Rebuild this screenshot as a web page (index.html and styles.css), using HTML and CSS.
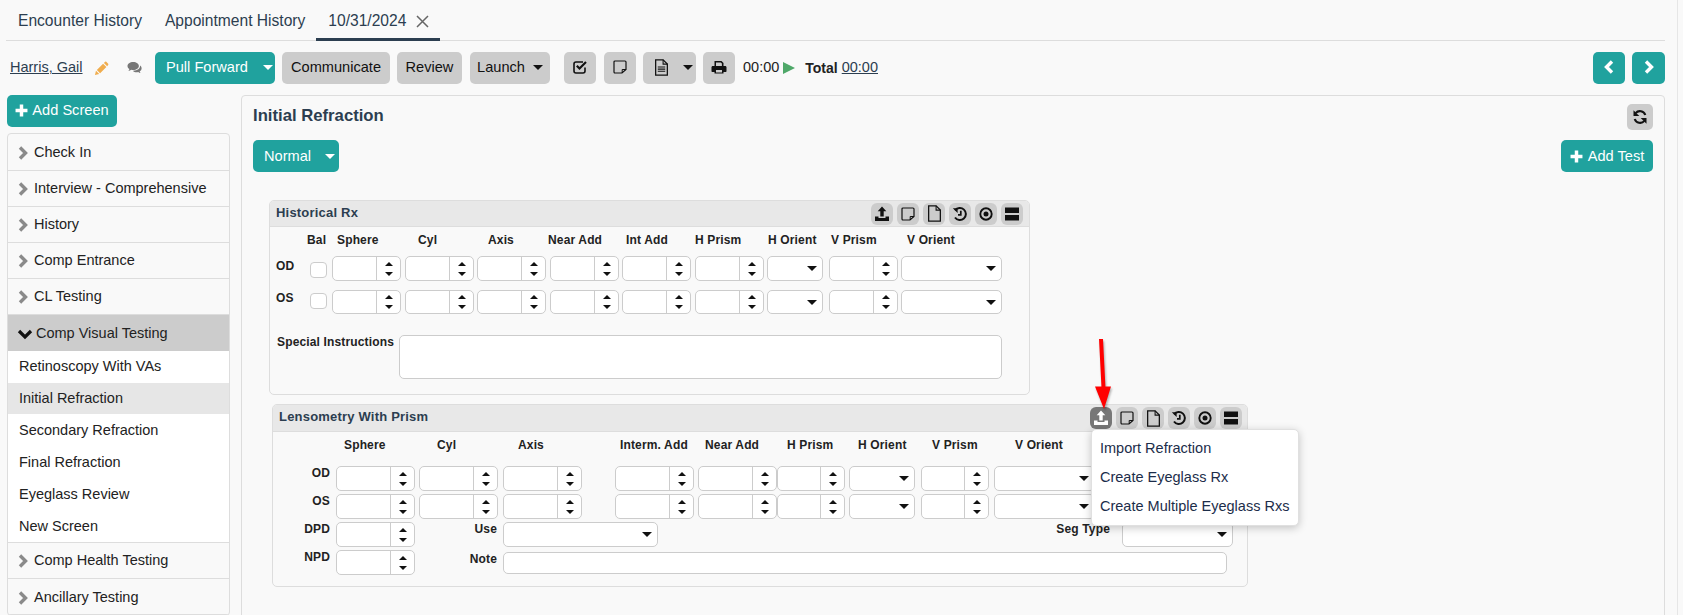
FILE: index.html
```html
<!DOCTYPE html>
<html lang="en">
<head>
<meta charset="utf-8">
<title>Initial Refraction</title>
<link rel="stylesheet" href="styles.css">
</head>
<body>
<svg class="defs" aria-hidden="true">
  <symbol id="i-x" viewBox="0 0 13 13"><path d="M1 1 12 12M12 1 1 12" fill="none" stroke="currentColor" stroke-width="1.500"/></symbol>
  <symbol id="i-right" viewBox="0 0 12 16"><path d="M3 2.500 8.500 8 3 13.500" fill="none" stroke="currentColor" stroke-width="3.400"/></symbol>
  <symbol id="i-down" viewBox="0 0 16 12"><path d="M2 3 8 9 14 3" fill="none" stroke="currentColor" stroke-width="3.200"/></symbol>
  <symbol id="i-left-n" viewBox="0 0 12 16"><path d="M9 2.500 3.500 8 9 13.500" fill="none" stroke="currentColor" stroke-width="3.400"/></symbol>
  <symbol id="i-plus" viewBox="0 0 12 12"><path d="M4.400 .5h3.200v3.900h3.900v3.200H7.600v3.900H4.400V7.600H.5V4.400h3.900z" fill="currentColor"/></symbol>
  <symbol id="i-pencil" viewBox="0 0 16 16"><path d="M1 15l1.100-4.600 3.500 3.500zM3 9.600l6.700-6.700 3.500 3.500-6.700 6.700zM10.600 2l1.200-1.100a1 1 0 0 1 1.300 0l2 2a1 1 0 0 1 0 1.300L14 5.500z" fill="currentColor"/></symbol>
  <symbol id="i-chat" viewBox="0 0 16 14"><path d="M6.200 1C2.900 1 .5 2.800.5 5c0 1.200.7 2.300 1.900 3-.2.8-.6 1.400-1 1.900 1.100-.1 2.100-.6 2.800-1.100.7.1 1.300.2 2 .2 3.200 0 5.700-1.800 5.700-4S9.400 1 6.200 1z" fill="currentColor"/><path d="M13.200 4.600c.1 3-2.900 5.200-6.700 5.200l-.7 0c.9 1 2.400 1.500 3.900 1.500.5 0 1-.1 1.500-.2.600.5 1.400.9 2.400 1-.4-.4-.7-1-.9-1.600 1.200-.7 1.900-1.700 1.900-2.900 0-1.300-.5-2.300-1.400-3z" fill="currentColor"/></symbol>
  <symbol id="i-check" viewBox="0 0 16 16"><path d="M13 8.500V12a2 2 0 0 1-2 2H4a2 2 0 0 1-2-2V5a2 2 0 0 1 2-2h7" fill="none" stroke="currentColor" stroke-width="1.600"/><path d="M4.800 6.800 7.500 9.500 14 3" fill="none" stroke="currentColor" stroke-width="2.200"/></symbol>
  <symbol id="i-note" viewBox="0 0 14 14"><path d="M2 1h10a1 1 0 0 1 1 1v7.500L9 13H2a1 1 0 0 1-1-1V2a1 1 0 0 1 1-1z" fill="none" stroke="currentColor" stroke-width="1.200"/><path d="M9.200 13V9.500H13" fill="none" stroke="currentColor" stroke-width="1"/></symbol>
  <symbol id="i-doc" viewBox="0 0 14 16"><path d="M1.500.8h7l4 4v10.400h-11z" fill="none" stroke="currentColor" stroke-width="1.200"/><path d="M8.500.8v4h4" fill="none" stroke="currentColor" stroke-width="1"/><path d="M3.500 7.500h7M3.500 9.500h7M3.500 11.500h7" fill="none" stroke="currentColor" stroke-width="1"/></symbol>
  <symbol id="i-file" viewBox="0 0 14 16"><path d="M1.500.8h7l4 4v10.400h-11z" fill="none" stroke="currentColor" stroke-width="1.200"/><path d="M8.500.8v4h4" fill="none" stroke="currentColor" stroke-width="1"/></symbol>
  <symbol id="i-print" viewBox="0 0 16 14"><path d="M3.500 1h7l2 2v3h-1.600V3.600L9.800 2.500H5V6H3.500zM1.800 6h12.400c.7 0 1.300.6 1.300 1.300v4c0 .4-.3.7-.7.7H12.500v1.500h-9V12H1.200c-.4 0-.7-.3-.7-.7v-4C.5 6.600 1.100 6 1.800 6zM5 10v2.500h6V10z" fill="currentColor" fill-rule="evenodd"/></symbol>
  <symbol id="i-refresh" viewBox="0 0 16 16"><path d="M13.300 6A5.700 5.700 0 0 0 3.600 4.100" fill="none" stroke="currentColor" stroke-width="2.100"/><path d="M1.500 1.200V7h5.800z" fill="currentColor"/><path d="M2.700 10a5.700 5.700 0 0 0 9.700 1.900" fill="none" stroke="currentColor" stroke-width="2.100"/><path d="M14.500 14.800V9H8.700z" fill="currentColor"/></symbol>
  <symbol id="i-upload" viewBox="0 0 16 16"><path d="M8 .5l4.300 4.800H9.700v5.200H6.300V5.300H3.700z" fill="currentColor"/><path d="M1 10.500h3.500v1.500h7v-1.500H15V15H1z" fill="currentColor"/></symbol>
  <symbol id="i-history" viewBox="0 0 16 16"><path d="M3.100 4.400A6 6 0 1 1 3 11.500" fill="none" stroke="currentColor" stroke-width="2"/><path d="M.8 2.200h4.800v4.800z" fill="currentColor"/><path d="M8.800 4.800v4H6" fill="none" stroke="currentColor" stroke-width="1.700"/></symbol>
  <symbol id="i-dot" viewBox="0 0 16 16"><circle cx="8" cy="8" r="5.700" fill="none" stroke="currentColor" stroke-width="1.900"/><circle cx="8" cy="8" r="2.500" fill="currentColor"/></symbol>
  <symbol id="i-bars" viewBox="0 0 14 14"><path d="M0 .5h14v5.500H0zM0 8h14v5.500H0z" fill="currentColor"/></symbol>
</svg>

<div class="page">
  <nav class="tabs">
    <a class="tab">Encounter History</a>
    <a class="tab">Appointment History</a>
    <a class="tab tab-active">10/31/2024<svg class="tab-x"><use href="#i-x"/></svg></a>
  </nav>

  <div class="toolbar">
    <a class="patient">Harris, Gail</a>
    <svg class="ic-pencil"><use href="#i-pencil"/></svg>
    <svg class="ic-chat"><use href="#i-chat"/></svg>
    <button class="btn teal split pull">Pull Forward<span class="caret light"></span></button>
    <button class="btn grey comm">Communicate</button>
    <button class="btn grey rev">Review</button>
    <button class="btn grey launch">Launch<span class="caret"></span></button>
    <button class="btn grey sq first-sq"><svg class="ic16"><use href="#i-check"/></svg></button>
    <button class="btn grey sq"><svg class="ic14"><use href="#i-note"/></svg></button>
    <button class="btn grey docbtn"><svg class="ic-doc"><use href="#i-doc"/></svg><span class="caret"></span></button>
    <button class="btn grey sq"><svg class="ic16"><use href="#i-print"/></svg></button>
    <span class="time">00:00</span>
    <span class="play"></span>
    <b class="total">Total</b>
    <a class="time-link">00:00</a>
    <span class="spacer"></span>
    <button class="btn teal nav"><svg class="ic-nav"><use href="#i-left-n"/></svg></button>
    <button class="btn teal nav"><svg class="ic-nav flip"><use href="#i-left-n"/></svg></button>
  </div>

  <div class="content">
    <aside class="left">
      <button class="btn teal add-screen"><svg class="ic-plus"><use href="#i-plus"/></svg>Add Screen</button>
      <div class="side">
        <div class="group"><svg class="chev"><use href="#i-right"/></svg>Check In</div>
        <div class="group"><svg class="chev"><use href="#i-right"/></svg>Interview - Comprehensive</div>
        <div class="group"><svg class="chev"><use href="#i-right"/></svg>History</div>
        <div class="group"><svg class="chev"><use href="#i-right"/></svg>Comp Entrance</div>
        <div class="group"><svg class="chev"><use href="#i-right"/></svg>CL Testing</div>
        <div class="group open"><svg class="chev-d"><use href="#i-down"/></svg>Comp Visual Testing</div>
        <div class="subs">
          <div class="sub">Retinoscopy With VAs</div>
          <div class="sub current">Initial Refraction</div>
          <div class="sub">Secondary Refraction</div>
          <div class="sub">Final Refraction</div>
          <div class="sub">Eyeglass Review</div>
          <div class="sub">New Screen</div>
        </div>
        <div class="group"><svg class="chev"><use href="#i-right"/></svg>Comp Health Testing</div>
        <div class="group"><svg class="chev"><use href="#i-right"/></svg>Ancillary Testing</div>
      </div>
    </aside>

    <main class="main">
      <div class="main-head">
        <h1 class="main-title">Initial Refraction</h1>
        <button class="btn grey refresh"><svg class="ic16"><use href="#i-refresh"/></svg></button>
      </div>
      <div class="main-actions">
        <button class="btn teal split normal">Normal<span class="caret light"></span></button>
        <button class="btn teal add-test"><svg class="ic-plus"><use href="#i-plus"/></svg>Add Test</button>
      </div>

      <section class="card hist">
        <header class="card-head">
          <h2 class="card-title">Historical Rx</h2>
          <div class="tools">
            <button class="tool"><svg class="t-ic"><use href="#i-upload"/></svg></button>
            <button class="tool"><svg class="t-sm"><use href="#i-note"/></svg></button>
            <button class="tool"><svg class="t-doc"><use href="#i-file"/></svg></button>
            <button class="tool"><svg class="t-ic"><use href="#i-history"/></svg></button>
            <button class="tool"><svg class="t-ic"><use href="#i-dot"/></svg></button>
            <button class="tool"><svg class="t-sm"><use href="#i-bars"/></svg></button>
          </div>
        </header>
        <div class="hist-labels">
          <span>Bal</span><span>Sphere</span><span>Cyl</span><span>Axis</span><span>Near Add</span><span>Int Add</span><span>H Prism</span><span>H Orient</span><span>V Prism</span><span>V Orient</span>
        </div>
        <div class="hist-row od">
          <span class="eye">OD</span><span class="check"></span>
          <span class="num"><input type="text"><span class="spin"></span></span>
          <span class="num"><input type="text"><span class="spin"></span></span>
          <span class="num"><input type="text"><span class="spin"></span></span>
          <span class="num"><input type="text"><span class="spin"></span></span>
          <span class="num"><input type="text"><span class="spin"></span></span>
          <span class="num"><input type="text"><span class="spin"></span></span>
          <span class="sel"></span>
          <span class="num"><input type="text"><span class="spin"></span></span>
          <span class="sel vo"></span>
        </div>
        <div class="hist-row os">
          <span class="eye">OS</span><span class="check"></span>
          <span class="num"><input type="text"><span class="spin"></span></span>
          <span class="num"><input type="text"><span class="spin"></span></span>
          <span class="num"><input type="text"><span class="spin"></span></span>
          <span class="num"><input type="text"><span class="spin"></span></span>
          <span class="num"><input type="text"><span class="spin"></span></span>
          <span class="num"><input type="text"><span class="spin"></span></span>
          <span class="sel"></span>
          <span class="num"><input type="text"><span class="spin"></span></span>
          <span class="sel vo"></span>
        </div>
        <div class="instructions">
          <label class="instr-label">Special Instructions</label>
          <textarea class="instr-box"></textarea>
        </div>
      </section>

      <section class="card lens">
        <header class="card-head">
          <h2 class="card-title">Lensometry With Prism</h2>
          <div class="tools">
            <div class="tool-wrap">
              <button class="tool active"><svg class="t-ic"><use href="#i-upload"/></svg></button>
              <svg class="arrow" viewBox="0 0 24 76"><path d="M8 2h4l2.500 49h-4z M4 49.500h16L13 72z" fill="#f00"/></svg>
              <div class="menu">
                <a class="menu-item">Import Refraction</a>
                <a class="menu-item">Create Eyeglass Rx</a>
                <a class="menu-item">Create Multiple Eyeglass Rxs</a>
              </div>
            </div>
            <button class="tool"><svg class="t-sm"><use href="#i-note"/></svg></button>
            <button class="tool"><svg class="t-doc"><use href="#i-file"/></svg></button>
            <button class="tool"><svg class="t-ic"><use href="#i-history"/></svg></button>
            <button class="tool"><svg class="t-ic"><use href="#i-dot"/></svg></button>
            <button class="tool"><svg class="t-sm"><use href="#i-bars"/></svg></button>
          </div>
        </header>
        <div class="lens-labels">
          <span>Sphere</span><span>Cyl</span><span>Axis</span><span>Interm. Add</span><span>Near Add</span><span>H Prism</span><span>H Orient</span><span>V Prism</span><span>V Orient</span>
        </div>
        <div class="lens-grid">
          <span class="rlabel c1">OD</span>
          <span class="num"><input type="text"><span class="spin"></span></span>
          <span class="num"><input type="text"><span class="spin"></span></span>
          <span class="num"><input type="text"><span class="spin"></span></span>
          <span class="num"><input type="text"><span class="spin"></span></span>
          <span class="num"><input type="text"><span class="spin"></span></span>
          <span class="num prism"><input type="text"><span class="spin"></span></span>
          <span class="sel"></span>
          <span class="num prism"><input type="text"><span class="spin"></span></span>
          <span class="sel vo"></span>

          <span class="rlabel c1">OS</span>
          <span class="num"><input type="text"><span class="spin"></span></span>
          <span class="num"><input type="text"><span class="spin"></span></span>
          <span class="num"><input type="text"><span class="spin"></span></span>
          <span class="num"><input type="text"><span class="spin"></span></span>
          <span class="num"><input type="text"><span class="spin"></span></span>
          <span class="num prism"><input type="text"><span class="spin"></span></span>
          <span class="sel"></span>
          <span class="num prism"><input type="text"><span class="spin"></span></span>
          <span class="sel vo"></span>

          <span class="rlabel c1">DPD</span>
          <span class="num"><input type="text"><span class="spin"></span></span>
          <span class="rlabel c3">Use</span>
          <span class="sel use"></span>
          <span class="rlabel seg-label">Seg Type</span>
          <span class="sel seg"></span>

          <span class="rlabel c1">NPD</span>
          <span class="num"><input type="text"><span class="spin"></span></span>
          <span class="rlabel c3 note-label">Note</span>
          <input class="note" type="text">
        </div>
      </section>
    </main>
  </div>
</div>
</body>
</html>
```

FILE: styles.css
```css
* { box-sizing: border-box; }
html, body { margin: 0; height: 615px; overflow: hidden; }
body {
  background: #f9f9f9;
  color: #222;
  font: 14.5px/1.2 "Liberation Sans", Arial, sans-serif;
}
.defs { display: none; }
svg { display: block; flex: none; }

.page {
  width: 1678px;
  height: 615px;
  padding: 0 12px 0 6px;
  border-right: 1px solid #e6e6e6;
}

/* tabs */
.tabs {
  display: flex;
  height: 41px;
  border-bottom: 1px solid #ddd;
}
.tab {
  height: 41px;
  padding: 12px 11px 0 12px;
  font-size: 15.6px;
  line-height: 18px;
  color: #2c3e50;
  white-space: nowrap;
}
.tab-active {
  display: flex;
  border-bottom: 3px solid #2c3e50;
}
.tab-x {
  width: 13px;
  height: 13px;
  margin: 3px 0 0 10px;
  color: #666;
}

/* toolbar */
.toolbar {
  display: flex;
  align-items: center;
  height: 32px;
  margin-top: 11px;
  padding-left: 4px;
}
.patient { text-decoration: underline; color: #2c3e50; font-size: 14.5px; width: 72px; white-space: nowrap; }
.ic-pencil { width: 15px; height: 15px; color: #f0ad4e; margin-left: 12px; }
.ic-chat { width: 16px; height: 14px; color: #777; margin-left: 18px; }

.btn {
  display: inline-flex;
  align-items: center;
  justify-content: center;
  height: 32px;
  padding: 0 0 2px;
  border: 0;
  border-radius: 5px;
  font: 14.6px "Liberation Sans", Arial, sans-serif;
  white-space: nowrap;
}
.teal { background: #20a29e; color: #fff; }
.grey { background: #ccc; color: #111; }
.caret {
  width: 0;
  height: 0;
  border: 5px solid transparent;
  border-top-color: #111;
  border-bottom-width: 0;
}
.caret.light { border-top-color: #fff; }
.split { justify-content: flex-start; padding-left: 11px; }
.pull { width: 120px; margin-left: 12px; }
.pull .caret { margin-left: 15px; }
.comm { width: 108px; margin-left: 7px; }
.rev { width: 65px; margin-left: 7px; }
.launch { width: 80px; margin-left: 8px; }
.launch .caret { margin-left: 8px; }
.sq { width: 32px; margin-left: 8px; }
.first-sq { margin-left: 14px; }
.docbtn { width: 53px; margin-left: 7px; justify-content: flex-start; padding-left: 11px; }
.docbtn .caret { margin-left: 14px; }
.docbtn + .sq { margin-left: 7px; }
.ic16 { width: 16px; height: 16px; }
.ic14 { width: 14px; height: 14px; }
.ic-doc { width: 15px; height: 17px; }
.time { margin-left: 8px; }
.play {
  width: 0;
  height: 0;
  margin-left: 4px;
  border-style: solid;
  border-width: 6.5px 0 6.5px 12px;
  border-color: transparent transparent transparent #4fa869;
}
.total { margin-left: 10px; font-size: 14px; }
.time-link { margin-left: 4px; color: #2c3e50; text-decoration: underline; }
.spacer { flex: 1; }
.nav { width: 32px; }
.nav + .nav { width: 33px; margin-left: 7px; }
.ic-nav { width: 12px; height: 16px; }
.flip { transform: scaleX(-1); }

/* layout */
.content {
  display: flex;
  margin-top: 11px;
}
.left { width: 235px; flex: none; }
.ic-plus { width: 13px; height: 13px; margin-right: 4px; }
.add-screen { width: 110px; margin-left: 1px; }
.side {
  width: 223px;
  margin: 6px 0 0 1px;
  border: 1px solid #ddd;
  border-radius: 4px;
  overflow: hidden;
}
.group {
  display: flex;
  align-items: center;
  height: 36px;
  border-bottom: 1px solid #ddd;
  padding-left: 20px;
  color: #222;
}
.group:first-child { height: 37px; padding-top: 1px; }
.group:last-child { padding-top: 3px; }
.chev { width: 12px; height: 16px; color: #8a8a8a; margin: 0 5px 0 -11px; }
.chev-d { width: 16px; height: 12px; color: #111; margin: 0 3px 0 -11px; }
.open { background: #ccc; border-bottom: 0; padding-top: 2px; }
.subs { background: #fff; border-bottom: 1px solid #ddd; }
.sub { height: 32px; padding: 0 0 0 11px; line-height: 32px; }
.sub:first-child { line-height: 31px; }
.sub.current { background: #e6e6e6; height: 31px; line-height: 31px; }

.main {
  flex: 1;
  height: 540px;
  padding: 8px 11px 0 11px;
  border: 1px solid #ddd;
  border-radius: 4px;
}
.main-head { display: flex; align-items: center; justify-content: space-between; height: 26px; }
.main-title { margin: 0 0 2px; font-size: 16.7px; font-weight: bold; color: #2c3e50; }
.refresh { width: 26px; height: 26px; padding: 0; }
.main-actions { display: flex; justify-content: space-between; margin-top: 10px; }
.main-actions .btn { padding-bottom: 0; }
.normal { width: 86px; }
.normal .caret { margin-left: 14px; }
.add-test { width: 92px; }
.add-test .ic-plus { margin-right: 5px; }

/* cards */
.card {
  border: 1px solid #ddd;
  border-radius: 5px;
}
.hist { width: 761px; height: 195px; margin: 28px 0 0 16px; }
.lens { width: 976px; height: 183px; margin: 9px 0 0 19px; }
.card-head {
  display: flex;
  align-items: center;
  justify-content: space-between;
  height: 26px;
  padding: 0 6px 0 6px;
  background: #e8e8e8;
  border-bottom: 1px solid #ddd;
  border-radius: 4px 4px 0 0;
}
.lens .card-head { height: 27px; padding-right: 5px; }
.card-title { margin: 0 0 2px; font-size: 13px; font-weight: bold; letter-spacing: .2px; color: #2c3e50; }
.tools { display: flex; gap: 4px; }
.tool-wrap { position: relative; }
.tool {
  display: flex;
  align-items: center;
  justify-content: center;
  width: 22px;
  height: 22px;
  padding: 0;
  border: 0;
  border-radius: 6px;
  background: #ccc;
  color: #111;
}
.tool.active { background: #777; color: #fff; }
.t-ic { width: 16px; height: 16px; }
.t-sm { width: 14px; height: 14px; }
.t-doc { width: 15px; height: 17px; }
.arrow {
  position: absolute;
  left: 1px;
  bottom: 16px;
  width: 24px;
  height: 76px;
  filter: drop-shadow(1px 2px 1px rgba(0,0,0,.3));
}
.menu {
  position: absolute;
  z-index: 5;
  top: 100%;
  left: 1px;
  width: 208px;
  padding: 4px 0;
  background: #fff;
  border: 1px solid #e0e0e0;
  border-radius: 5px;
  box-shadow: 0 2px 8px rgba(0,0,0,.22);
}
.menu-item {
  display: block;
  height: 29px;
  padding-left: 8px;
  line-height: 29px;
  font-size: 14.5px;
  color: #1c2d4a;
  white-space: nowrap;
}

/* form bits */
.hist-labels, .lens-labels, .eye, .rlabel, .instr-label {
  font-size: 12px;
  font-weight: bold;
  letter-spacing: .15px;
  line-height: 14px;
  color: #222;
  white-space: nowrap;
}
.hist-labels {
  display: grid;
  grid-template-columns: 30px 81px 70px 60px 78px 69px 73px 63px 76px auto;
  padding: 6px 0 0 37px;
}
.hist-row {
  display: grid;
  grid-template-columns: 35px 27px 73px 72px 73px 72px 73px 72px 62px 72px 101px;
  align-items: start;
}
.hist-row.od { margin-top: 9px; height: 25px; }
.hist-row.os { margin-top: 9px; height: 24px; }
.hist-row.os .num, .hist-row.os .sel { height: 24px; }
.eye { padding: 3px 0 0 6px; }
.check {
  display: block;
  width: 17px;
  height: 16px;
  margin: 6px 0 0 5px;
  background: #fff;
  border: 1px solid #ccc;
  border-radius: 4px;
}
.hist-row.os .check { margin-top: 3px; }
.hist-row.os .eye { padding-top: 1px; }

.num {
  display: flex;
  width: 69px;
  height: 25px;
  background: #fff;
  border: 1px solid #ccc;
  border-radius: 5px;
}
.num input {
  flex: 1;
  min-width: 0;
  border: 0;
  padding: 0;
  background: transparent;
  outline: 0;
}
.spin {
  flex: none;
  display: flex;
  flex-direction: column;
  align-items: center;
  justify-content: center;
  gap: 6px;
  width: 24px;
  border-left: 1px solid #ccc;
}
.spin::before, .spin::after {
  content: "";
  width: 0;
  height: 0;
  border-left: 4px solid transparent;
  border-right: 4px solid transparent;
}
.spin::before { border-bottom: 4px solid #111; }
.spin::after { border-top: 4px solid #111; }

.sel {
  display: flex;
  align-items: center;
  justify-content: flex-end;
  width: 56px;
  height: 25px;
  padding-right: 5px;
  background: #fff;
  border: 1px solid #ccc;
  border-radius: 5px;
}
.sel::after {
  content: "";
  width: 0;
  height: 0;
  border-left: 5px solid transparent;
  border-right: 5px solid transparent;
  border-top: 5px solid #111;
}
.sel.vo { width: 101px; }

.instructions { display: flex; margin: 21px 0 0 7px; }
.instr-label { width: 122px; }
.instr-box {
  width: 603px;
  height: 44px;
  margin: 0;
  background: #fff;
  border: 1px solid #ccc;
  border-radius: 5px;
  resize: none;
}

.lens-labels {
  display: grid;
  grid-template-columns: 93px 81px 102px 85px 82px 71px 74px 83px auto;
  padding: 6px 0 0 71px;
}
.lens-grid {
  display: grid;
  grid-template-columns: 63px 83px 84px 112px 83px 79px 72px 72px 73px 128px 111px;
  grid-auto-rows: 25px;
  row-gap: 3px;
  align-items: start;
  margin-top: 14px;
}
.lens-grid .num { width: 79px; }
.lens-grid .num.prism { width: 68px; }
.lens-grid .sel { width: 66px; }
.lens-grid .sel.vo { width: 101px; }
.rlabel { padding: 0 6px 0 0; text-align: right; }
.c1 { grid-column: 1; }
.c3 { grid-column: 3; }
.lens-grid .sel.use { width: 155px; grid-column: 4 / span 2; }
.seg-label { grid-column: 10; padding-right: 12px; }
.lens-grid .sel.seg { width: 111px; grid-column: 11; }
.note-label { padding-top: 2px; }
.note {
  grid-column: 4 / -1;
  width: 724px;
  height: 22px;
  margin-top: 2px;
  background: #fff;
  border: 1px solid #ccc;
  border-radius: 5px;
}
```
